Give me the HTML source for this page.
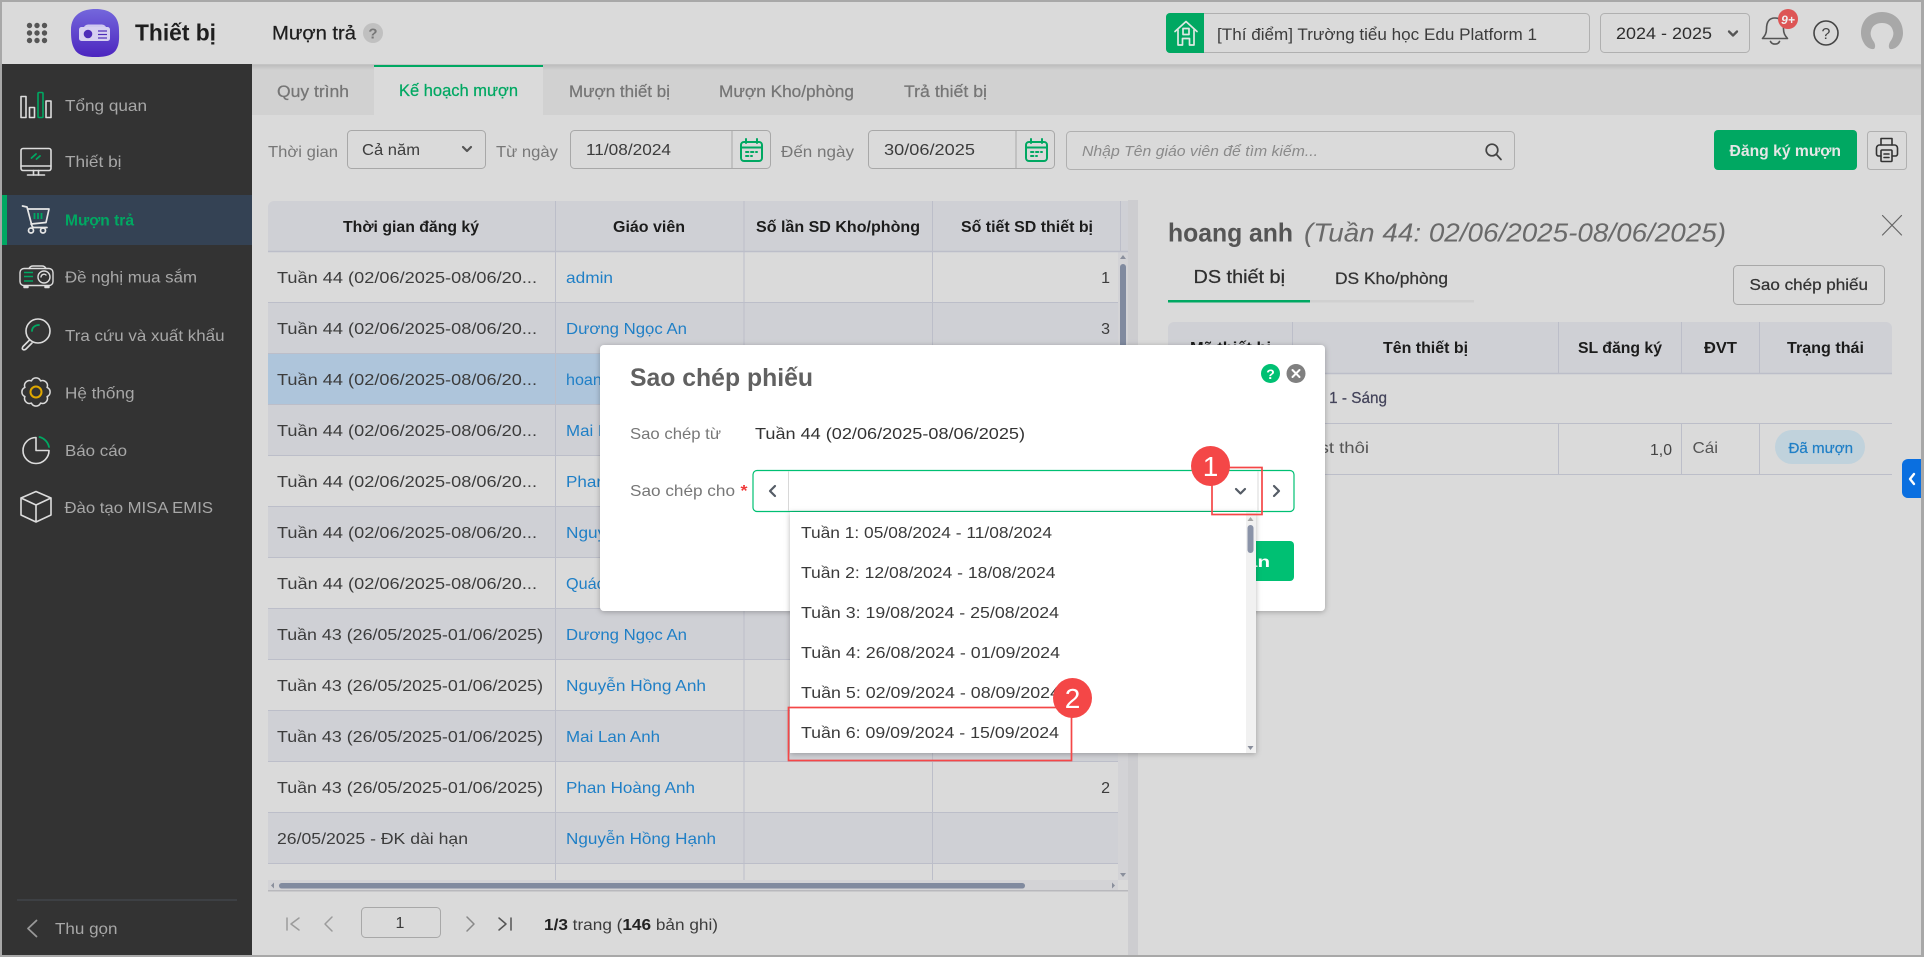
<!DOCTYPE html>
<html lang="vi">
<head>
<meta charset="utf-8">
<title>Thiết bị - Mượn trả</title>
<style>
html,body{margin:0;padding:0;width:1924px;height:957px;overflow:hidden;background:#dadada}
svg{display:block}
text{font-family:"Liberation Sans","Noto Sans CJK SC",sans-serif;font-size:16px;fill:#3c3c3c}
.m{stroke-width:.25px;paint-order:stroke}
.s{fill:#a8a8a8}
.l{fill:#1f7fc6}
.h{fill:#1c1c1c;font-weight:700;font-size:16px}
.i{fill:none;stroke-linecap:round;stroke-linejoin:round}
</style>
</head>
<body>
<svg width="1924" height="957" viewBox="0 0 1924 957" xmlns="http://www.w3.org/2000/svg">
<defs>
<linearGradient id="app" x1="0" y1="0" x2="0" y2="1"><stop offset="0" stop-color="#7467dc"/><stop offset="1" stop-color="#4c25bf"/></linearGradient>
<linearGradient id="hs" x1="0" y1="0" x2="0" y2="1"><stop offset="0" stop-color="#bdbdbd"/><stop offset="1" stop-color="#d1d1d1"/></linearGradient>
<filter id="sh" x="-10%" y="-10%" width="120%" height="120%"><feDropShadow dx="0" dy="1" stdDeviation="3" flood-color="#000" flood-opacity=".28"/></filter>
</defs>

<!-- base -->
<rect width="1924" height="957" fill="#dadada"/>

<!-- tab bar -->
<rect x="252" y="65" width="1670" height="50" fill="#d1d1d1"/>
<rect x="252" y="65" width="1670" height="5" fill="url(#hs)"/>
<rect x="374" y="65" width="169" height="50" fill="#dadada"/>
<rect x="374" y="65" width="169" height="2" fill="#00a862"/>
<text x="277" y="97" class="m" stroke="#757575" style="fill:#757575;font-size:17px" textLength="72" lengthAdjust="spacingAndGlyphs">Quy trình</text>
<text x="399" y="96" class="m" stroke="#00a862" style="fill:#00a862;font-size:17px" textLength="119" lengthAdjust="spacingAndGlyphs">Kế hoạch mượn</text>
<text x="569" y="97" class="m" stroke="#757575" style="fill:#757575;font-size:17px" textLength="101" lengthAdjust="spacingAndGlyphs">Mượn thiết bị</text>
<text x="719" y="97" class="m" stroke="#757575" style="fill:#757575;font-size:17px" textLength="135" lengthAdjust="spacingAndGlyphs">Mượn Kho/phòng</text>
<text x="904" y="97" class="m" stroke="#757575" style="fill:#757575;font-size:17px" textLength="83" lengthAdjust="spacingAndGlyphs">Trả thiết bị</text>

<!-- filters -->
<text x="268" y="157" style="fill:#777" textLength="70" lengthAdjust="spacingAndGlyphs">Thời gian</text>
<rect x="347.5" y="130.5" width="138" height="38" rx="4" fill="#dadada" stroke="#a8a8a8"/>
<text x="362" y="155" textLength="58" lengthAdjust="spacingAndGlyphs">Cả năm</text>
<polyline class="i" points="463,147 467,151 471,147" stroke="#555" stroke-width="2.200"/>
<text x="496" y="157" style="fill:#777" textLength="62" lengthAdjust="spacingAndGlyphs">Từ ngày</text>
<rect x="570.5" y="130.5" width="200" height="38" rx="4" fill="#dadada" stroke="#a8a8a8"/>
<line x1="732" y1="131" x2="732" y2="169" stroke="#a8a8a8"/>
<text x="586" y="155" textLength="85" lengthAdjust="spacingAndGlyphs">11/08/2024</text>
<g class="i" stroke="#00a862" stroke-width="2">
<rect x="741" y="142" width="21" height="19" rx="3"/><line x1="741" y1="147.500" x2="762" y2="147.500"/><line x1="746" y1="139" x2="746" y2="143"/><line x1="757" y1="139" x2="757" y2="143"/>
<line x1="746" y1="152" x2="757" y2="152" stroke-dasharray="2.400 2.600"/><line x1="746" y1="156" x2="752" y2="156" stroke-dasharray="2.400 2.600"/>
</g>
<text x="781" y="157" style="fill:#777" textLength="73" lengthAdjust="spacingAndGlyphs">Đến ngày</text>
<rect x="868.5" y="130.5" width="186" height="38" rx="4" fill="#dadada" stroke="#a8a8a8"/>
<line x1="1016" y1="131" x2="1016" y2="169" stroke="#a8a8a8"/>
<text x="884" y="155" textLength="91" lengthAdjust="spacingAndGlyphs">30/06/2025</text>
<g class="i" stroke="#00a862" stroke-width="2">
<rect x="1026" y="142" width="21" height="19" rx="3"/><line x1="1026" y1="147.500" x2="1047" y2="147.500"/><line x1="1031" y1="139" x2="1031" y2="143"/><line x1="1042" y1="139" x2="1042" y2="143"/>
<line x1="1031" y1="152" x2="1042" y2="152" stroke-dasharray="2.400 2.600"/><line x1="1031" y1="156" x2="1037" y2="156" stroke-dasharray="2.400 2.600"/>
</g>
<rect x="1066.5" y="131.5" width="448" height="38" rx="4" fill="#dadada" stroke="#b0b0b0"/>
<text x="1082" y="156" style="fill:#8a8a8a;font-size:15px;font-style:italic" textLength="236" lengthAdjust="spacingAndGlyphs">Nhập Tên giáo viên để tìm kiếm...</text>
<g class="i" stroke="#444" stroke-width="1.700"><circle cx="1492" cy="150" r="5.800"/><line x1="1496.500" y1="154.500" x2="1501" y2="159.500"/></g>
<rect x="1714" y="130" width="143" height="40" rx="4" fill="#00a862"/>
<text x="1729.500" y="156" style="fill:#e6e6e6;font-weight:700" textLength="111.500" lengthAdjust="spacingAndGlyphs">Đăng ký mượn</text>
<rect x="1867.500" y="131.500" width="39" height="38" rx="3" fill="#dadada" stroke="#b0b0b0"/>
<g class="i" stroke="#333" stroke-width="1.600">
<path d="M1881 145v-6.500h11v6.500"/><path d="M1881 156h-2.500a2 2 0 0 1-2-2v-6a3 3 0 0 1 3-3h15a3 3 0 0 1 3 3v6a2 2 0 0 1-2 2h-3"/><rect x="1881" y="150" width="11" height="11.500" rx="1"/><line x1="1884" y1="154" x2="1889" y2="154"/><line x1="1884" y1="157.500" x2="1889" y2="157.500"/>
</g>

<!-- main table -->
<path d="M268 251V207a6 6 0 0 1 6-6H1128V251Z" fill="#cfd0d5"/>
<rect x="268" y="302" width="850" height="51" fill="#cfd0d5"/>
<rect x="268" y="353" width="850" height="51" fill="#aec5db"/>
<rect x="268" y="404" width="850" height="51" fill="#cfd0d5"/>
<rect x="268" y="506" width="850" height="51" fill="#cfd0d5"/>
<rect x="268" y="608" width="850" height="51" fill="#cfd0d5"/>
<rect x="268" y="710" width="850" height="51" fill="#cfd0d5"/>
<rect x="268" y="812" width="850" height="51" fill="#cfd0d5"/>
<rect x="1118" y="251" width="10" height="629" fill="#d3d3d6"/>
<g stroke="#bcbec9" stroke-width="1">
<line x1="268" y1="251.500" x2="1128" y2="251.500" stroke-width="1.500"/>
<line x1="268" y1="302.500" x2="1118" y2="302.500"/><line x1="268" y1="353.500" x2="1118" y2="353.500"/><line x1="268" y1="404.500" x2="1118" y2="404.500"/><line x1="268" y1="455.500" x2="1118" y2="455.500"/><line x1="268" y1="506.500" x2="1118" y2="506.500"/><line x1="268" y1="557.500" x2="1118" y2="557.500"/><line x1="268" y1="608.500" x2="1118" y2="608.500"/><line x1="268" y1="659.500" x2="1118" y2="659.500"/><line x1="268" y1="710.500" x2="1118" y2="710.500"/><line x1="268" y1="761.500" x2="1118" y2="761.500"/><line x1="268" y1="812.500" x2="1118" y2="812.500"/><line x1="268" y1="863.500" x2="1118" y2="863.500"/>
<line x1="555.500" y1="201" x2="555.500" y2="880"/><line x1="744" y1="201" x2="744" y2="880"/><line x1="932.500" y1="201" x2="932.500" y2="880"/><line x1="1120.500" y1="201" x2="1120.500" y2="251"/>
</g>
<rect x="1128" y="200" width="10" height="755" fill="#cdcdd0"/>
<text x="343" y="232" class="h" textLength="136" lengthAdjust="spacingAndGlyphs">Thời gian đăng ký</text>
<text x="613" y="232" class="h" textLength="72" lengthAdjust="spacingAndGlyphs">Giáo viên</text>
<text x="756" y="232" class="h" textLength="164" lengthAdjust="spacingAndGlyphs">Số lần SD Kho/phòng</text>
<text x="961" y="232" class="h" textLength="132" lengthAdjust="spacingAndGlyphs">Số tiết SD thiết bị</text>

<g>
<text x="277" y="283" textLength="260" lengthAdjust="spacingAndGlyphs">Tuần 44 (02/06/2025-08/06/20...</text>
<text x="277" y="334" textLength="260" lengthAdjust="spacingAndGlyphs">Tuần 44 (02/06/2025-08/06/20...</text>
<text x="277" y="385" textLength="260" lengthAdjust="spacingAndGlyphs">Tuần 44 (02/06/2025-08/06/20...</text>
<text x="277" y="436" textLength="260" lengthAdjust="spacingAndGlyphs">Tuần 44 (02/06/2025-08/06/20...</text>
<text x="277" y="487" textLength="260" lengthAdjust="spacingAndGlyphs">Tuần 44 (02/06/2025-08/06/20...</text>
<text x="277" y="538" textLength="260" lengthAdjust="spacingAndGlyphs">Tuần 44 (02/06/2025-08/06/20...</text>
<text x="277" y="589" textLength="260" lengthAdjust="spacingAndGlyphs">Tuần 44 (02/06/2025-08/06/20...</text>
<text x="277" y="640" textLength="266" lengthAdjust="spacingAndGlyphs">Tuần 43 (26/05/2025-01/06/2025)</text>
<text x="277" y="691" textLength="266" lengthAdjust="spacingAndGlyphs">Tuần 43 (26/05/2025-01/06/2025)</text>
<text x="277" y="742" textLength="266" lengthAdjust="spacingAndGlyphs">Tuần 43 (26/05/2025-01/06/2025)</text>
<text x="277" y="793" textLength="266" lengthAdjust="spacingAndGlyphs">Tuần 43 (26/05/2025-01/06/2025)</text>
<text x="277" y="844" textLength="191" lengthAdjust="spacingAndGlyphs">26/05/2025 - ĐK dài hạn</text>

<text x="566" y="283" class="l" textLength="47" lengthAdjust="spacingAndGlyphs">admin</text>
<text x="566" y="334" class="l" textLength="121" lengthAdjust="spacingAndGlyphs">Dương Ngọc An</text>
<text x="566" y="385" class="l" textLength="76" lengthAdjust="spacingAndGlyphs">hoang anh</text>
<text x="566" y="436" class="l" textLength="94" lengthAdjust="spacingAndGlyphs">Mai Lan Anh</text>
<text x="566" y="487" class="l" textLength="129" lengthAdjust="spacingAndGlyphs">Phan Hoàng Anh</text>
<text x="566" y="538" class="l" textLength="140" lengthAdjust="spacingAndGlyphs">Nguyễn Hồng Anh</text>
<text x="566" y="589" class="l" textLength="82" lengthAdjust="spacingAndGlyphs">Quách Hoa</text>
<text x="566" y="640" class="l" textLength="121" lengthAdjust="spacingAndGlyphs">Dương Ngọc An</text>
<text x="566" y="691" class="l" textLength="140" lengthAdjust="spacingAndGlyphs">Nguyễn Hồng Anh</text>
<text x="566" y="742" class="l" textLength="94" lengthAdjust="spacingAndGlyphs">Mai Lan Anh</text>
<text x="566" y="793" class="l" textLength="129" lengthAdjust="spacingAndGlyphs">Phan Hoàng Anh</text>
<text x="566" y="844" class="l" textLength="150" lengthAdjust="spacingAndGlyphs">Nguyễn Hồng Hạnh</text>

<text x="1110" y="283" text-anchor="end">1</text>
<text x="1110" y="334" text-anchor="end">3</text>
<text x="1110" y="793" text-anchor="end">2</text>
</g>

<!-- table scrollbars -->
<rect x="1120" y="264" width="6" height="90" rx="3" fill="#808a9f"/>
<path d="M1123 255l3 4h-6z" fill="#8a8f9c"/>
<path d="M1123 877l3-4h-6z" fill="#8a8f9c"/>
<rect x="268" y="880" width="850" height="10" fill="#d3d3d6"/>
<rect x="268" y="890" width="860" height="1.500" fill="#b8b8bc"/>
<rect x="279" y="883" width="746" height="5.500" rx="2.700" fill="#808a9f"/>
<path d="M271 885.500l3-3v6z" fill="#8a8f9c"/><path d="M1115 885.500l-3-3v6z" fill="#8a8f9c"/>

<!-- pagination -->
<g class="i" stroke="#9b9b9b" stroke-width="1.500">
<line x1="287" y1="918" x2="287" y2="930"/><polyline points="299,918 291,924 299,930"/>
<polyline points="332,917 325,924 332,931"/>
<polyline points="467,917 474,924 467,931" stroke="#888"/>
</g>
<g class="i" stroke="#555" stroke-width="1.500"><polyline points="499,918 506,924 499,930"/><line x1="511" y1="918" x2="511" y2="930"/></g>
<rect x="361.500" y="907.500" width="79" height="30" rx="4" fill="#dadada" stroke="#a8a8a8"/>
<text x="400" y="928" text-anchor="middle">1</text>
<text x="544" y="930" textLength="174" lengthAdjust="spacingAndGlyphs"><tspan font-weight="700" fill="#222">1/3</tspan> trang (<tspan font-weight="700" fill="#222">146</tspan> bản ghi)</text>

<!-- right panel -->
<text x="1168" y="241.500" style="fill:#555;font-size:26px;font-weight:700" textLength="125" lengthAdjust="spacingAndGlyphs">hoang anh</text>
<text x="1304" y="241.500" style="fill:#6a6a6a;font-size:26px;font-style:italic" textLength="422" lengthAdjust="spacingAndGlyphs">(Tuần 44: 02/06/2025-08/06/2025)</text>
<g class="i" stroke="#666" stroke-width="1.200"><line x1="1882.500" y1="215.500" x2="1901.500" y2="235"/><line x1="1901.500" y1="215.500" x2="1882.500" y2="235"/></g>
<text x="1193.500" y="283" class="m" stroke="#2e2e2e" style="fill:#2e2e2e;font-size:18px" textLength="91.500" lengthAdjust="spacingAndGlyphs">DS thiết bị</text>
<text x="1335" y="284" class="m" stroke="#333" style="fill:#333;font-size:17px" textLength="113" lengthAdjust="spacingAndGlyphs">DS Kho/phòng</text>
<rect x="1168" y="300" width="306" height="2.500" fill="#d0d0d0"/>
<rect x="1168" y="300" width="142" height="2.500" fill="#00a862"/>
<rect x="1733.500" y="265.500" width="151" height="39" rx="4" fill="#dadada" stroke="#a8a8a8"/>
<text x="1749.500" y="290" class="m" stroke="#333" style="fill:#333" textLength="118.500" lengthAdjust="spacingAndGlyphs">Sao chép phiếu</text>

<path d="M1168 373V328a6 6 0 0 1 6-6H1886a6 6 0 0 1 6 6V373Z" fill="#cfd0d5"/>
<g stroke="#bcbec9">
<line x1="1168" y1="373.500" x2="1892" y2="373.500" stroke-width="1.500"/>
<line x1="1168" y1="423.500" x2="1892" y2="423.500"/><line x1="1168" y1="474.500" x2="1892" y2="474.500"/>
<line x1="1292.500" y1="322" x2="1292.500" y2="373"/><line x1="1558.500" y1="322" x2="1558.500" y2="373"/><line x1="1681.500" y1="322" x2="1681.500" y2="373"/><line x1="1759.500" y1="322" x2="1759.500" y2="373"/>
<line x1="1558.500" y1="424" x2="1558.500" y2="474"/><line x1="1681.500" y1="424" x2="1681.500" y2="474"/><line x1="1759.500" y1="424" x2="1759.500" y2="474"/>
</g>
<text x="1190" y="353" class="h" textLength="81" lengthAdjust="spacingAndGlyphs">Mã thiết bị</text>
<text x="1383" y="353" class="h" textLength="85" lengthAdjust="spacingAndGlyphs">Tên thiết bị</text>
<text x="1578" y="353" class="h" textLength="84" lengthAdjust="spacingAndGlyphs">SL đăng ký</text>
<text x="1704" y="353" class="h" textLength="33" lengthAdjust="spacingAndGlyphs">ĐVT</text>
<text x="1787" y="353" class="h" textLength="77" lengthAdjust="spacingAndGlyphs">Trạng thái</text>
<text x="1300" y="403" class="m" stroke="#43435a" style="fill:#43435a" textLength="87" lengthAdjust="spacingAndGlyphs">Tiết 1 - Sáng</text>
<text x="1300" y="453" style="fill:#555" textLength="69" lengthAdjust="spacingAndGlyphs">Test thôi</text>
<text x="1650" y="455" style="fill:#444" textLength="22" lengthAdjust="spacingAndGlyphs">1,0</text>
<text x="1692.500" y="453" style="fill:#555" textLength="25.500" lengthAdjust="spacingAndGlyphs">Cái</text>
<rect x="1775" y="430" width="90" height="34" rx="17" fill="#c0d2dc"/>
<text x="1788.500" y="453" class="m" stroke="#1f7fc6" style="fill:#1f7fc6;font-size:15px" textLength="64.500" lengthAdjust="spacingAndGlyphs">Đã mượn</text>
<path d="M1922 459h-14a6 6 0 0 0-6 6v27a6 6 0 0 0 6 6h14z" fill="#0a6fe0"/>
<polyline class="i" points="1914,474 1910,479 1914,484" stroke="#fff" stroke-width="2.400"/>

<!-- modal -->
<rect x="600" y="345" width="725" height="266" rx="4" fill="#fff" filter="url(#sh)"/>
<text x="630" y="386" style="fill:#616161;font-size:25px;font-weight:700" textLength="183" lengthAdjust="spacingAndGlyphs">Sao chép phiếu</text>
<circle cx="1270.500" cy="373.500" r="9.500" fill="#00c073"/>
<text x="1270.500" y="379" text-anchor="middle" style="fill:#fff;font-size:14px;font-weight:700">?</text>
<circle cx="1296" cy="373.500" r="9.500" fill="#808080"/>
<g class="i" stroke="#fff" stroke-width="2"><line x1="1292.500" y1="370" x2="1299.500" y2="377"/><line x1="1299.500" y1="370" x2="1292.500" y2="377"/></g>
<text x="630" y="439" style="fill:#777" textLength="91" lengthAdjust="spacingAndGlyphs">Sao chép từ</text>
<text x="755" y="439" style="fill:#333" textLength="270" lengthAdjust="spacingAndGlyphs">Tuần 44 (02/06/2025-08/06/2025)</text>
<text x="630" y="496" style="fill:#777" textLength="105" lengthAdjust="spacingAndGlyphs">Sao chép cho</text>
<text x="740.500" y="496" style="fill:#f03a3a;font-weight:700" textLength="7" lengthAdjust="spacingAndGlyphs">*</text>
<rect x="753" y="470.500" width="541" height="41" rx="4" fill="#fff" stroke="#00c073" stroke-width="1.200"/>
<line x1="788.500" y1="471" x2="788.500" y2="511" stroke="#d8d8d8"/><line x1="1258" y1="471" x2="1258" y2="511" stroke="#d8d8d8"/>
<g class="i" stroke="#555c66" stroke-width="2.200">
<polyline points="775,486 770,491 775,496"/>
<polyline points="1236,489 1240.500,493.500 1245,489"/>
<polyline points="1274,486 1279,491 1274,496"/>
</g>
<rect x="1200" y="541" width="94" height="40" rx="4" fill="#00c073"/>
<text x="1246" y="567" style="fill:#fff;font-weight:700" textLength="24" lengthAdjust="spacingAndGlyphs">ận</text>

<!-- dropdown -->
<rect x="790" y="512" width="466" height="241" fill="#fff" filter="url(#sh)"/>
<rect x="1246" y="512" width="10" height="241" fill="#f1f1f1"/>
<rect x="1247.500" y="525" width="6" height="28" rx="3" fill="#8a93a8"/>
<path d="M1250.500 517l3 4h-6z" fill="#a5a5a5"/><path d="M1250.500 750l3-4h-6z" fill="#8a8f9c"/>
<text x="801" y="538" style="fill:#3a3a3a" textLength="251" lengthAdjust="spacingAndGlyphs">Tuần 1: 05/08/2024 - 11/08/2024</text>
<text x="801" y="578" style="fill:#3a3a3a" textLength="254.500" lengthAdjust="spacingAndGlyphs">Tuần 2: 12/08/2024 - 18/08/2024</text>
<text x="801" y="618" style="fill:#3a3a3a" textLength="258" lengthAdjust="spacingAndGlyphs">Tuần 3: 19/08/2024 - 25/08/2024</text>
<text x="801" y="658" style="fill:#3a3a3a" textLength="259" lengthAdjust="spacingAndGlyphs">Tuần 4: 26/08/2024 - 01/09/2024</text>
<text x="801" y="698" style="fill:#3a3a3a" textLength="259" lengthAdjust="spacingAndGlyphs">Tuần 5: 02/09/2024 - 08/09/2024</text>
<text x="801" y="738" style="fill:#3a3a3a" textLength="258" lengthAdjust="spacingAndGlyphs">Tuần 6: 09/09/2024 - 15/09/2024</text>

<!-- annotations -->
<rect x="1212" y="467.500" width="50" height="47" fill="none" stroke="#f44747" stroke-width="1.700"/>
<ellipse cx="1210.500" cy="466" rx="19.500" ry="20" fill="#f44747"/>
<text x="1210.500" y="476" text-anchor="middle" style="fill:#fff;font-size:28px">1</text>
<rect x="788.500" y="707.500" width="283" height="53" fill="none" stroke="#f44747" stroke-width="1.700"/>
<ellipse cx="1072.500" cy="698" rx="19.500" ry="20" fill="#f44747"/>
<text x="1072.500" y="708" text-anchor="middle" style="fill:#fff;font-size:28px">2</text>

<!-- header -->
<rect x="2" y="2" width="1920" height="62" fill="#dadada"/>
<rect x="252" y="64" width="1670" height="1" fill="#c4c4c4"/>
<g fill="#565656">
<circle cx="29.500" cy="25.500" r="2.700"/><circle cx="37" cy="25.500" r="2.700"/><circle cx="44.500" cy="25.500" r="2.700"/>
<circle cx="29.500" cy="33" r="2.700"/><circle cx="37" cy="33" r="2.700"/><circle cx="44.500" cy="33" r="2.700"/>
<circle cx="29.500" cy="40.500" r="2.700"/><circle cx="37" cy="40.500" r="2.700"/><circle cx="44.500" cy="40.500" r="2.700"/>
</g>
<path d="M95.500 9C108 9 119 14 119 30C119 36 120 44 116 50C112 56 104 57 95.500 57C87 57 79 56 75 50C71 44 71 36 71 30C71 14 83 9 95.500 9Z" fill="url(#app)"/>
<path d="M84 27c1-2 3-2.500 5-2.500h12c2 0 4 .5 5 2.500z" fill="#cfc8ef"/>
<rect x="79" y="27" width="31" height="14" rx="2.500" fill="#d6d0f0"/>
<circle cx="88" cy="34" r="4.300" fill="#4d2cb9"/>
<g stroke="#4d2cb9" stroke-width="1.200"><line x1="98" y1="31" x2="107" y2="31"/><line x1="98" y1="34.500" x2="107" y2="34.500"/><line x1="98" y1="38" x2="107" y2="38"/></g>
<text x="135" y="40.500" style="fill:#1e1e1e;font-size:23px;font-weight:700" textLength="81" lengthAdjust="spacingAndGlyphs">Thiết bị</text>
<text x="272" y="39.500" class="m" stroke="#1e1e1e" style="fill:#1e1e1e;font-size:19px" textLength="84" lengthAdjust="spacingAndGlyphs">Mượn trả</text>
<circle cx="373" cy="33" r="10" fill="#c0c0c0"/>
<text x="373" y="38.500" text-anchor="middle" style="fill:#777;font-size:15px;font-weight:700">?</text>

<rect x="1166.500" y="13.500" width="423" height="39" rx="4" fill="#dadada" stroke="#b0b0b0"/>
<path d="M1204 13h-34a4 4 0 0 0-4 4v32a4 4 0 0 0 4 4h34z" fill="#00a862"/>
<g class="i" stroke="#dfe9e3" stroke-width="1.700">
<path d="M1175 31.500L1186 21.500L1197 31.500"/><path d="M1178 30V45H1182.500V38.500H1189.500V45H1194V30"/><rect x="1183" y="28.500" width="6" height="6"/>
</g>
<text x="1217" y="40" style="fill:#3c3c3c;font-size:17px" textLength="320" lengthAdjust="spacingAndGlyphs">[Thí điểm] Trường tiểu học Edu Platform 1</text>
<rect x="1600.500" y="13.500" width="149" height="39" rx="4" fill="#dadada" stroke="#b0b0b0"/>
<text x="1616" y="39" style="fill:#2e2e2e;font-size:17px" textLength="96" lengthAdjust="spacingAndGlyphs">2024 - 2025</text>
<polyline class="i" points="1729,31.500 1733,35.500 1737,31.500" stroke="#555" stroke-width="2.300"/>
<g class="i" stroke="#555" stroke-width="1.600">
<path d="M1775 18c-6.500 0-8.500 5-8.500 11c0 5-2 7-4 9.500h25c-2-2.500-4-4.500-4-9.500c0-6-2-11-8.500-11z"/><path d="M1770.500 41.500a4.800 4 0 0 0 9 0"/>
</g>
<circle cx="1788" cy="19" r="10" fill="#dd5555"/>
<text x="1788" y="24" text-anchor="middle" style="fill:#f0f0f0;font-size:12px;font-weight:700;font-style:italic">9+</text>
<circle cx="1826" cy="33" r="12" fill="none" stroke="#444" stroke-width="1.600"/>
<text x="1826" y="39" text-anchor="middle" style="fill:#444;font-size:16px">?</text>
<path d="M1874 49C1866 50 1861 40 1861 33C1861 20 1870 12 1882 12C1894 12 1903 20 1903 33C1903 40 1898 50 1890 49C1888 47 1889 44 1890 42C1893 38 1894 34 1893 31C1892 26 1888 23 1882 23C1876 23 1872 26 1871 31C1870 34 1871 38 1874 42C1875 44 1876 47 1874 49Z" fill="#a8a8a8"/>

<!-- sidebar -->
<rect x="2" y="64" width="250" height="893" fill="#333333"/>
<rect x="2" y="195" width="250" height="50" fill="#344254"/>
<rect x="2" y="195" width="5" height="50" fill="#00a862"/>

<g class="i" stroke="#dcdcdc" stroke-width="1.600">
<rect x="21" y="96.500" width="5" height="21"/><rect x="29.500" y="107.500" width="5" height="10"/><rect x="46" y="101" width="5" height="16.500"/>
</g>
<rect x="38" y="92.500" width="5" height="25" rx="1" fill="none" stroke="#00a862" stroke-width="1.600"/>

<g class="i" stroke="#dcdcdc" stroke-width="1.600">
<rect x="21" y="148.500" width="30" height="22" rx="2"/><line x1="21" y1="166" x2="51" y2="166"/><line x1="33.500" y1="170.500" x2="33.500" y2="175"/><line x1="38.500" y1="170.500" x2="38.500" y2="175"/><line x1="27.500" y1="175" x2="44.500" y2="175"/>
</g>
<g class="i" stroke="#00a862" stroke-width="1.800"><line x1="31.500" y1="158" x2="36" y2="154"/><line x1="36.500" y1="159" x2="40" y2="156"/></g>

<g class="i" stroke="#e6e6e6" stroke-width="1.700">
<path d="M22.500 206L27 207L32 226C32.500 227 33 227.500 34 227.500H47"/><path d="M28 209H49L46 222.500L31 224"/><circle cx="31" cy="230.500" r="2.500"/><circle cx="43" cy="230.500" r="2.500"/>
</g>
<g stroke="#00a862" stroke-width="1.800"><line x1="34.500" y1="213" x2="34.500" y2="219"/><line x1="38" y1="213" x2="38" y2="219"/><line x1="41.500" y1="213" x2="41.500" y2="219"/></g>

<g class="i" stroke="#dcdcdc" stroke-width="1.400">
<rect x="20" y="268.500" width="33" height="17" rx="4"/><path d="M29 268.500C30 266.500 31 266 33 266H42C44 266 45 266.500 46 268.500"/><rect x="24" y="286" width="4" height="1.500"/><rect x="45" y="286" width="4" height="1.500"/><circle cx="44" cy="277" r="6"/><path d="M41 277a3 3 0 0 1 5-2"/>
</g>
<g stroke="#00a862" stroke-width="1.500"><line x1="24" y1="272.500" x2="33" y2="272.500"/><line x1="24" y1="276.500" x2="33" y2="276.500"/><line x1="24" y1="281" x2="33" y2="281"/></g>

<g class="i" stroke="#dcdcdc" stroke-width="1.600">
<circle cx="38" cy="331" r="12"/><path d="M29.500 340L23 346.500C22 348 22 349 23 349.500C24 350 25 350 26 349L32 343"/>
</g>
<path class="i" d="M32 331C32 327.500 35 325 39 325" stroke="#00a862" stroke-width="1.800"/>

<path class="i" d="M47.090 387.410A5 5 0 0 1 47.090 396.590A5 5 0 0 1 40.590 403.090A5 5 0 0 1 31.410 403.090A5 5 0 0 1 24.910 396.590A5 5 0 0 1 24.910 387.410A5 5 0 0 1 31.410 380.910A5 5 0 0 1 40.590 380.910A5 5 0 0 1 47.090 387.410Z" stroke="#dcdcdc" stroke-width="1.500"/>
<circle cx="36" cy="392" r="5.500" fill="none" stroke="#e0a800" stroke-width="2"/>

<path class="i" d="M36 437.500A13 13 0 1 0 49 450.500H36V437.500Z" stroke="#dcdcdc" stroke-width="1.600"/>
<path class="i" d="M39.500 437A13 13 0 0 1 49 447" stroke="#00a862" stroke-width="1.800"/>

<path class="i" d="M36 491.500L51 498V515L36 522L21 515V498ZM21 498L36 505L51 498M36 505V522" stroke="#dcdcdc" stroke-width="1.600"/>

<text x="65" y="111" class="s" textLength="82" lengthAdjust="spacingAndGlyphs">Tổng quan</text>
<text x="65" y="167" class="s" textLength="56.500" lengthAdjust="spacingAndGlyphs">Thiết bị</text>
<text x="65" y="225.500" style="fill:#00a862;font-weight:700" textLength="69" lengthAdjust="spacingAndGlyphs">Mượn trả</text>
<text x="65" y="282.500" class="s" textLength="132" lengthAdjust="spacingAndGlyphs">Đề nghị mua sắm</text>
<text x="65" y="341" class="s" textLength="159.500" lengthAdjust="spacingAndGlyphs">Tra cứu và xuất khẩu</text>
<text x="65" y="398.500" class="s" textLength="69.500" lengthAdjust="spacingAndGlyphs">Hệ thống</text>
<text x="65" y="456" class="s" textLength="62" lengthAdjust="spacingAndGlyphs">Báo cáo</text>
<text x="64.500" y="513" class="s" textLength="148.500" lengthAdjust="spacingAndGlyphs">Đào tạo MISA EMIS</text>
<line x1="17" y1="900" x2="237" y2="900" stroke="#474c55"/>
<polyline class="i" points="36.500,920.500 28,928.500 36.500,936.500" stroke="#999" stroke-width="1.800"/>
<text x="55" y="934" class="s" textLength="62.500" lengthAdjust="spacingAndGlyphs">Thu gọn</text>

<!-- frame -->
<path d="M0 0H1924V957H0ZM2 2V955H1921V2Z" fill="#a8a8a8" fill-rule="evenodd"/>
</svg>
</body>
</html>
